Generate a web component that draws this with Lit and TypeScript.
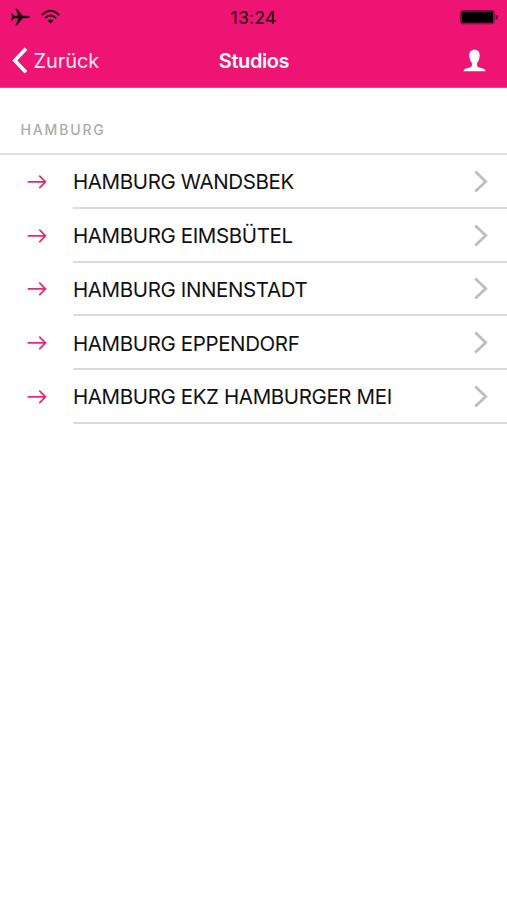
import { LitElement, html, css } from "lit";
import { customElement } from "lit/decorators.js";

@customElement("status-bar")
class StatusBar extends LitElement {
  static styles = css`
    :host { display: grid; grid-template-columns: 1fr auto 1fr; height: 34px; align-items: center; color: #26000f; }
    .left { display: flex; align-items: center; gap: 11px; padding-left: 11px; }
    .time { font-size: 17.8px; line-height: 20px; padding-top: 2px; letter-spacing: 0.1px; }
    .right { display: flex; justify-content: flex-end; padding-right: 8px; }
    svg { display: block; }
  `;
  render() {
    return html`
      <div class="left">
        <svg width="19" height="18" viewBox="0 0 19 18" fill="#20000d">
          <path d="M19 9Q18.2 7.9 16.5 7.8H11.6L6.2 0.8H4.5L7.2 7.8H3.3L1.3 5.5H0.2L1 9L0.2 12.5H1.3L3.3 10.2H7.2L4.5 17.2H6.2L11.6 10.2H16.5Q18.2 10.1 19 9Z"/>
        </svg>
        <svg width="19" height="16" viewBox="0 0 19 16" fill="none" stroke="#20000d" stroke-width="1.9">
          <path d="M0.9 6.1Q9.5 -2.5 18.1 6.1"/>
          <path d="M4 9.2Q9.5 3.7 15 9.2"/>
          <path d="M6.6 11.7Q9.5 9.1 12.4 11.7L9.5 14.6Z" fill="#20000d" stroke="none"/>
        </svg>
      </div>
      <div class="time">13:24</div>
      <div class="right">
        <svg width="39" height="16" viewBox="0 0 39 16">
          <rect x="0.6" y="1.6" width="33.6" height="13.2" rx="2.2" fill="none" stroke="#78073a" stroke-width="1"/>
          <rect x="1.6" y="2.6" width="31.6" height="11.2" rx="1" fill="#000"/>
          <path d="M35.6 5.6Q38 6.2 38 8.2T35.6 10.8Z" fill="#50052a"/>
        </svg>
      </div>
    `;
  }
}

@customElement("nav-bar")
class NavBar extends LitElement {
  static styles = css`
    :host { display: grid; grid-template-columns: 1fr auto 1fr; height: 53px; align-items: center; color: #fff; font-size: 20px; }
    .back { display: flex; align-items: center; gap: 5.5px; padding-left: 12px; }
    .label { letter-spacing: -0.08px; color: #ffe6f2; }
    .title { font-weight: 600; letter-spacing: -0.4px; padding-left: 1px; }
    .user { display: flex; justify-content: flex-end; padding-right: 21px; }
    svg { display: block; }
  `;
  render() {
    return html`
      <div class="back">
        <svg width="16" height="27" viewBox="0 0 16 27" fill="none" stroke="#fff" stroke-width="3.6">
          <path d="M14 1.8L2.8 13.5L14 25.2"/>
        </svg>
        <span class="label">Zurück</span>
      </div>
      <div class="title">Studios</div>
      <div class="user">
        <svg width="23" height="24" viewBox="0 0 23 24" fill="#fff">
          <path d="M11.5 0.8C7.9 0.8 6.2 3.1 6.3 6.6C6.4 9.8 7.4 12.4 8.9 14V16.8C8.6 18 6.6 18.6 4.2 19.2C1.9 19.8 0.7 20.4 0.5 22.3H22.5C22.3 20.4 21.1 19.8 18.8 19.2C16.4 18.6 14.4 18 14.1 16.8V14C15.6 12.4 16.6 9.8 16.7 6.6C16.8 3.1 15.1 0.8 11.5 0.8Z"/>
        </svg>
      </div>
    `;
  }
}

@customElement("app-root")
class AppRoot extends LitElement {
  static styles = css`
    :host { display: block; min-height: 900px; background: #fff; font-family: Inter, "Liberation Sans", sans-serif; }
    .head { background: #ee1474; border-bottom: 1px solid #d5528d; box-sizing: border-box; height: 88px; }
    .section { box-sizing: border-box; height: 67px; padding: 32px 20.5px 0; border-bottom: 2px solid #dedede; color: #acacac; font-size: 14px; font-weight: 500; line-height: 20px; letter-spacing: 1.85px; }
    .row { display: flex; height: 53.75px; }
    .icon { width: 73px; display: flex; align-items: center; padding-left: 27px; box-sizing: border-box; }
    .body { flex: 1; display: flex; align-items: center; justify-content: space-between; padding-right: 19px; padding-top: 1px; border-bottom: 2px solid #dbdbdb; color: #111; font-size: 20.5px; letter-spacing: -0.38px; white-space: nowrap; }
    .name { padding-top: 1px; }
    svg { display: block; }
  `;
  private studios = [
    "HAMBURG WANDSBEK",
    "HAMBURG EIMSBÜTEL",
    "HAMBURG INNENSTADT",
    "HAMBURG EPPENDORF",
    "HAMBURG EKZ HAMBURGER MEI",
  ];
  render() {
    return html`
      <div class="head"><status-bar></status-bar><nav-bar></nav-bar></div>
      <div class="section">HAMBURG</div>
      ${this.studios.map((name) => html`
        <div class="row">
          <div class="icon">
            <svg width="20" height="14" viewBox="0 0 20 14" fill="none" stroke="#e62a78" stroke-width="1.8">
              <path d="M1.4 6.9H18M12.8 1.2L18.5 6.9L12.8 12.6" stroke-linecap="round" stroke-linejoin="round"/>
            </svg>
          </div>
          <div class="body">
            <span class="name">${name}</span>
            <svg width="14" height="23" viewBox="0 0 14 23" fill="none" stroke="#bdbdbd" stroke-width="2.8">
              <path d="M1.3 1.5L11.7 11.5L1.3 21.5"/>
            </svg>
          </div>
        </div>`)}
    `;
  }
}
